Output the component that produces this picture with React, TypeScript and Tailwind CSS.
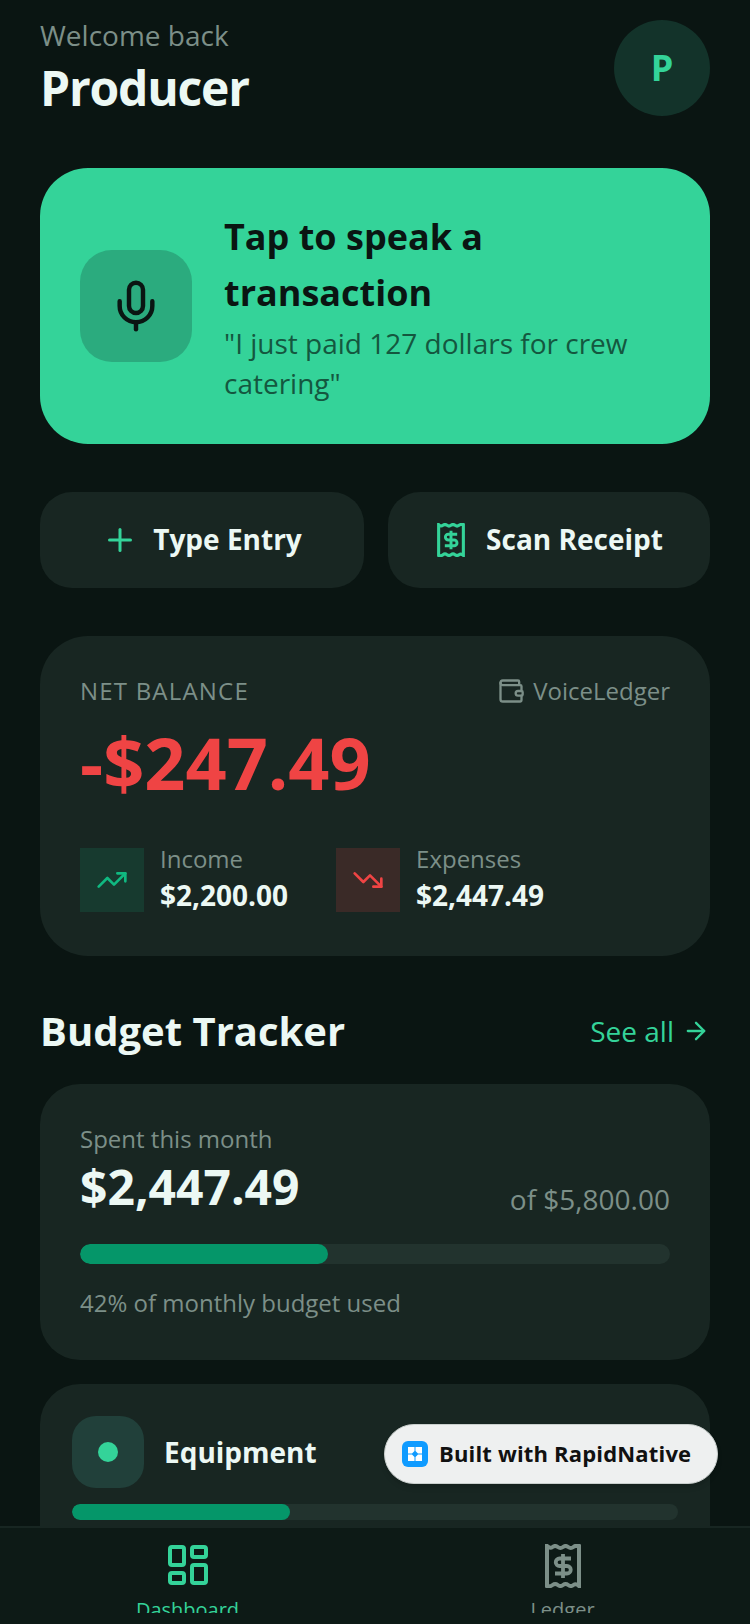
import React from "react";
import { Mic, Plus, Wallet, TrendingUp, TrendingDown, ArrowRight, LayoutDashboard } from "lucide-react";

function ReceiptDollar({ className }: { className?: string }) {
  return (
    <svg viewBox="0 0 36 44" className={className} fill="none" stroke="currentColor">
      <path
        d="M2 2 Q5 5 7.6 3 T12.8 3 T18 3 T23.2 3 T28.4 3 T34 2 V42 Q31 39 28.4 41 T23.2 41 T18 41 T12.8 41 T7.6 41 T2 42 Z"
        strokeWidth="4"
        strokeLinejoin="miter"
      />
      <path
        d="M26 14.5 H14.5 a3.7 3.7 0 0 0 0 7.5 h7.5 a3.7 3.7 0 0 1 0 7.5 H10 M18 10 v24"
        strokeWidth="3.8"
      />
    </svg>
  );
}

function Stat({ label, value, box, icon }: { label: string; value: string; box: string; icon: React.ReactNode }) {
  return (
    <div className="flex items-start gap-4">
      <div className={`w-16 h-16 flex items-center justify-center ${box}`}>{icon}</div>
      <div className="flex flex-col -mt-[5px]">
        <span className="text-[24px] leading-[32px] text-[#7c8f88]">{label}</span>
        <span className="text-[28px] leading-[38px] mt-[1px] font-bold text-[#ecf8f4]">{value}</span>
      </div>
    </div>
  );
}

export default function App() {
  return (
    <div
      className="relative h-[1624px] w-[750px] overflow-hidden flex flex-col bg-[#0a1512]"
      style={{ fontFamily: '"Open Sans", "Noto Sans", sans-serif' }}
    >
      <main className="flex-1 min-h-0 overflow-hidden px-10">
        <header className="flex items-start justify-between pt-5 h-[168px]">
          <div className="flex flex-col">
            <span className="text-[28px] leading-[32px] text-[#7c8f88] -mt-[1px]">Welcome back</span>
            <span className="text-[48px] leading-[64px] font-bold tracking-[-1.2px] text-[#ecf8f4] mt-[5px]">Producer</span>
          </div>
          <div className="w-24 h-24 rounded-full bg-[#13332a] flex items-center justify-center">
            <span className="text-[36px] font-bold text-[#34d399]">P</span>
          </div>
        </header>

        <section className="h-[276px] rounded-[48px] bg-[#34d399] px-10 flex items-center gap-8">
          <div className="w-28 h-28 shrink-0 rounded-[32px] bg-[#2bab7e] flex items-center justify-center">
            <Mic className="w-14 h-14 text-[#0a1512]" strokeWidth={1.9} />
          </div>
          <div className="flex flex-col">
            <span className="text-[36px] leading-[56px] font-bold text-[#0a1512]">Tap to speak a transaction</span>
            <span className="text-[28px] leading-[40px] text-[#14573f] mt-[2px]">"I just paid 127 dollars for crew catering"</span>
          </div>
        </section>

        <div className="flex gap-6 mt-12">
          <button className="w-[324px] h-24 rounded-[32px] bg-[#182622] flex items-center justify-center gap-[15px]">
            <Plus className="w-9 h-9 text-[#34d399]" strokeWidth={2} />
            <span className="text-[28px] font-bold text-[#ecf8f4] -mt-[2px]">Type Entry</span>
          </button>
          <button className="flex-1 h-24 rounded-[32px] bg-[#182622] flex items-center justify-center gap-[21px] pl-[2px]">
            <ReceiptDollar className="w-[28px] h-[34px] text-[#34d399]" />
            <span className="text-[28px] font-bold text-[#ecf8f4] -mt-[2px]">Scan Receipt</span>
          </button>
        </div>

        <section className="mt-12 h-[320px] rounded-[48px] bg-[#182622] p-10">
          <div className="flex items-center justify-between h-8 mt-[-1px]">
            <span className="text-[24px] tracking-[1.2px] text-[#7c8f88]">NET BALANCE</span>
            <div className="flex items-center gap-2 text-[#7c8f88]">
              <Wallet className="w-7 h-7" strokeWidth={2} />
              <span className="text-[24px]">VoiceLedger</span>
            </div>
          </div>
          <div className="text-[72px] leading-[96px] font-bold text-[#ef4444] mt-[7px]">-$247.49</div>
          <div className="flex gap-12 mt-[38px]">
            <Stat label="Income" value="$2,200.00" box="bg-[#173a2f]" icon={<TrendingUp className="w-8 h-8 text-[#10b981]" strokeWidth={2} />} />
            <Stat label="Expenses" value="$2,447.49" box="bg-[#3a2a27]" icon={<TrendingDown className="w-8 h-8 text-[#ef4444]" strokeWidth={2} />} />
          </div>
        </section>

        <div className="flex items-center justify-between mt-[43px] h-[64px]">
          <span className="text-[40px] font-bold text-[#ecf8f4]">Budget Tracker</span>
          <div className="flex items-center gap-2 text-[#34d399]">
            <span className="text-[28px]">See all</span>
            <ArrowRight className="w-7 h-7" strokeWidth={2} />
          </div>
        </div>

        <section className="mt-[21px] h-[276px] rounded-[40px] bg-[#182622] p-10">
          <span className="block text-[24px] leading-[32px] text-[#7c8f88] -mt-[1px]">Spent this month</span>
          <div className="flex items-end justify-between">
            <span className="text-[48px] leading-[64px] font-bold text-[#ecf8f4]">$2,447.49</span>
            <span className="text-[28px] leading-[40px] text-[#7c8f88]">of $5,800.00</span>
          </div>
          <div className="mt-[25px] h-5 rounded-full bg-[#22332e] overflow-hidden">
            <div className="h-full w-[42%] rounded-full bg-[#059669]" />
          </div>
          <span className="block mt-[23px] text-[24px] leading-[32px] text-[#7c8f88]">42% of monthly budget used</span>
        </section>

        <section className="mt-6 h-[200px] rounded-[40px] bg-[#182622] p-8">
          <div className="flex items-center gap-5">
            <div className="w-[72px] h-[72px] rounded-[24px] bg-[#21403a] flex items-center justify-center">
              <div className="w-5 h-5 rounded-full bg-[#34d399]" />
            </div>
            <span className="text-[28px] font-bold text-[#ecf8f4]">Equipment</span>
          </div>
          <div className="mt-4 h-4 rounded-full bg-[#22332e] overflow-hidden">
            <div className="h-full w-[36%] rounded-full bg-[#059669]" />
          </div>
        </section>
      </main>

      <nav className="h-[98px] shrink-0 border-t-2 border-[#182622] bg-[#0d1a16] flex pt-[13px]">
        <div className="flex-1 flex flex-col items-center text-[#34d399]">
          <LayoutDashboard className="w-12 h-12" strokeWidth={2} />
          <span className="block h-[19px] mt-[5px] overflow-hidden text-[20px] leading-[32px]">Dashboard</span>
        </div>
        <div className="flex-1 flex flex-col items-center text-[#7c8f88]">
          <ReceiptDollar className="w-9 h-11 mt-[3px] mb-[1px]" />
          <span className="block h-[19px] mt-[5px] overflow-hidden text-[20px] leading-[32px]">Ledger</span>
        </div>
      </nav>

      <div className="absolute left-[384px] top-[1424px] w-[334px] h-[60px] rounded-full bg-[#eef0f0] border border-[#c9cfcd] shadow-md flex items-center pl-[17px] gap-[11px]">
        <svg viewBox="0 0 26 26" className="w-[26px] h-[26px]">
          <rect width="26" height="26" rx="6" fill="#0f9bff" />
          <path d="M6 6h6.500v4L10 12.500H6zM13.500 6H20v6.500h-4L13.500 10zM6 13.500h4l2.500 2.500V20H6zM20 13.500V20h-6.500v-4l2.500-2.500z" fill="#fff" />
        </svg>
        <span className="text-[22px] font-bold tracking-[0.17px] text-[#111] -mt-[2px]">Built with RapidNative</span>
      </div>
    </div>
  );
}
